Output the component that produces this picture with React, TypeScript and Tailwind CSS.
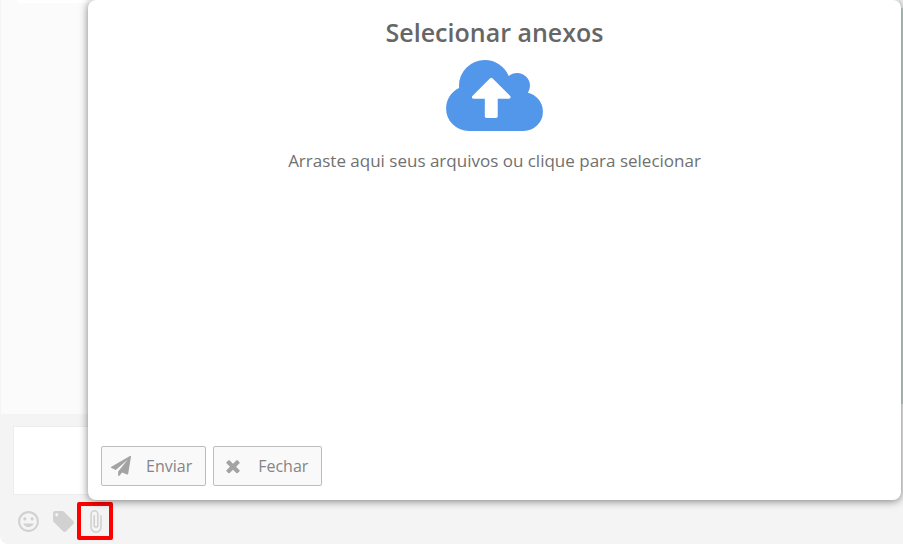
import React, { useState } from 'react';
import { MdAttachFile, MdInsertEmoticon, MdLocalOffer } from 'react-icons/md';

const CloudUploadIcon: React.FC = () => (
  <svg viewBox="0 128 1920 1408" className="w-[97px] h-[71px] fill-[#5297ea]" aria-hidden="true">
    <path d="M1280 864q0-14-9-23l-352-352q-9-9-23-9t-23 9l-351 351q-10 12-10 24 0 14 9 23t23 9h224v352q0 13 9.5 22.5t22.5 9.5h192q13 0 22.5-9.5t9.5-22.5v-352h224q13 0 22.5-9.5t9.5-22.5zm640 288q0 159-112.5 271.5t-271.5 112.5h-1088q-185 0-316.5-131.5t-131.5-316.5q0-130 70-240t188-165q-2-30-2-43 0-212 150-362t362-150q156 0 285.5 87t188.5 231q71-62 166-62 106 0 181 75t75 181q0 76-41 138 130 31 213.5 135.5t83.5 238.5z" />
  </svg>
);

const SendIcon: React.FC = () => (
  <svg viewBox="0 0 1792 1792" className="size-5 fill-[#a3a3a3]" aria-hidden="true">
    <path d="M1764 11q33 24 27 64l-256 1536q-5 29-32 45-14 8-31 8-11 0-24-5l-453-185-242 295q-18 23-49 23-13 0-22-4-19-7-30.5-23.5t-11.5-36.5v-349l864-1059-1069 925-395-162q-37-14-40-55-2-40 32-59l1664-960q15-9 32-9 20 0 36 11z" />
  </svg>
);

const CloseIcon: React.FC = () => (
  <svg viewBox="0 0 1792 1792" className="size-5 fill-[#a3a3a3]" aria-hidden="true">
    <path d="M1490 1322q0 40-28 68l-136 136q-28 28-68 28t-68-28l-294-294-294 294q-28 28-68 28t-68-28l-136-136q-28-28-28-68t28-68l294-294-294-294q-28-28-28-68t28-68l136-136q28-28 68-28t68 28l294 294 294-294q28-28 68-28t68 28l136 136q28 28 28 68t-28 68l-294 294 294 294q28 28 28 68z" />
  </svg>
);

const App: React.FC = () => {
  const [message, setMessage] = useState('');

  return (
    <div className="bg-white font-['Open_Sans','Noto_Sans',sans-serif]">
      <div className="relative flex flex-col min-h-screen bg-[#f4f4f4] rounded-bl-lg overflow-hidden">
        {/* Conversation */}
        <main className="flex-1 flex pl-px">
          <div className="flex-1 bg-[#fbfbfb] pl-4">
            <div className="h-[3px] bg-white rounded-bl-sm" />
          </div>
          <div className="w-1 flex flex-col pt-2 pb-[10px] bg-[#f4f4f4]">
            <div className="flex-1 bg-[#c9dcd6]" />
          </div>
        </main>

        {/* Message composer */}
        <footer className="pt-3 pb-1">
          <div className="px-[13px]">
            <textarea
              aria-label="Mensagem"
              value={message}
              onChange={(e) => setMessage(e.target.value)}
              className="block w-full h-[69px] resize-none bg-white border border-[#ededed] px-3 py-2 outline-none"
            />
          </div>
          <div className="flex items-center pt-[7px] pl-4 text-[25px] text-[#d1d1d1]">
            <button type="button" aria-label="Emojis" className="mr-[10px]">
              <MdInsertEmoticon />
            </button>
            <button type="button" aria-label="Etiquetas" className="mr-px">
              <MdLocalOffer />
            </button>
            <button
              type="button"
              aria-label="Anexar"
              className="flex items-center justify-center w-9 h-[38px] border-4 border-[#fe0000] rounded-xs"
            >
              <MdAttachFile />
            </button>
          </div>
        </footer>

        {/* Attachments dialog */}
        <section
          role="dialog"
          aria-labelledby="attachments-title"
          className="absolute top-0 bottom-11 left-[88px] right-[2px] flex flex-col bg-white rounded-lg shadow-[0_1px_8px_rgba(0,0,0,0.5)] px-[13px] pt-3 pb-[14px]"
        >
          <div className="flex-1 flex flex-col items-center text-center">
            <h1 id="attachments-title" className="text-[25px] leading-10 font-semibold text-[#666666]">
              Selecionar anexos
            </h1>
            <div className="pt-2">
              <CloudUploadIcon />
            </div>
            <p className="pt-[18px] text-[17px] leading-6 text-[#707070]">
              Arraste aqui seus arquivos ou clique para selecionar
            </p>
          </div>
          <div className="flex gap-[7px] text-base text-[#858585]">
            <button
              type="button"
              className="flex items-center gap-[15px] h-10 pl-[9px] pr-[13px] bg-[#f9f9f9] border border-[#bdbdbd] rounded-xs"
            >
              <SendIcon />
              Enviar
            </button>
            <button
              type="button"
              className="flex items-center gap-[15px] h-10 pl-[9px] pr-[13px] bg-[#f9f9f9] border border-[#bdbdbd] rounded-xs"
            >
              <CloseIcon />
              Fechar
            </button>
          </div>
        </section>
      </div>
    </div>
  );
};

export default App;
